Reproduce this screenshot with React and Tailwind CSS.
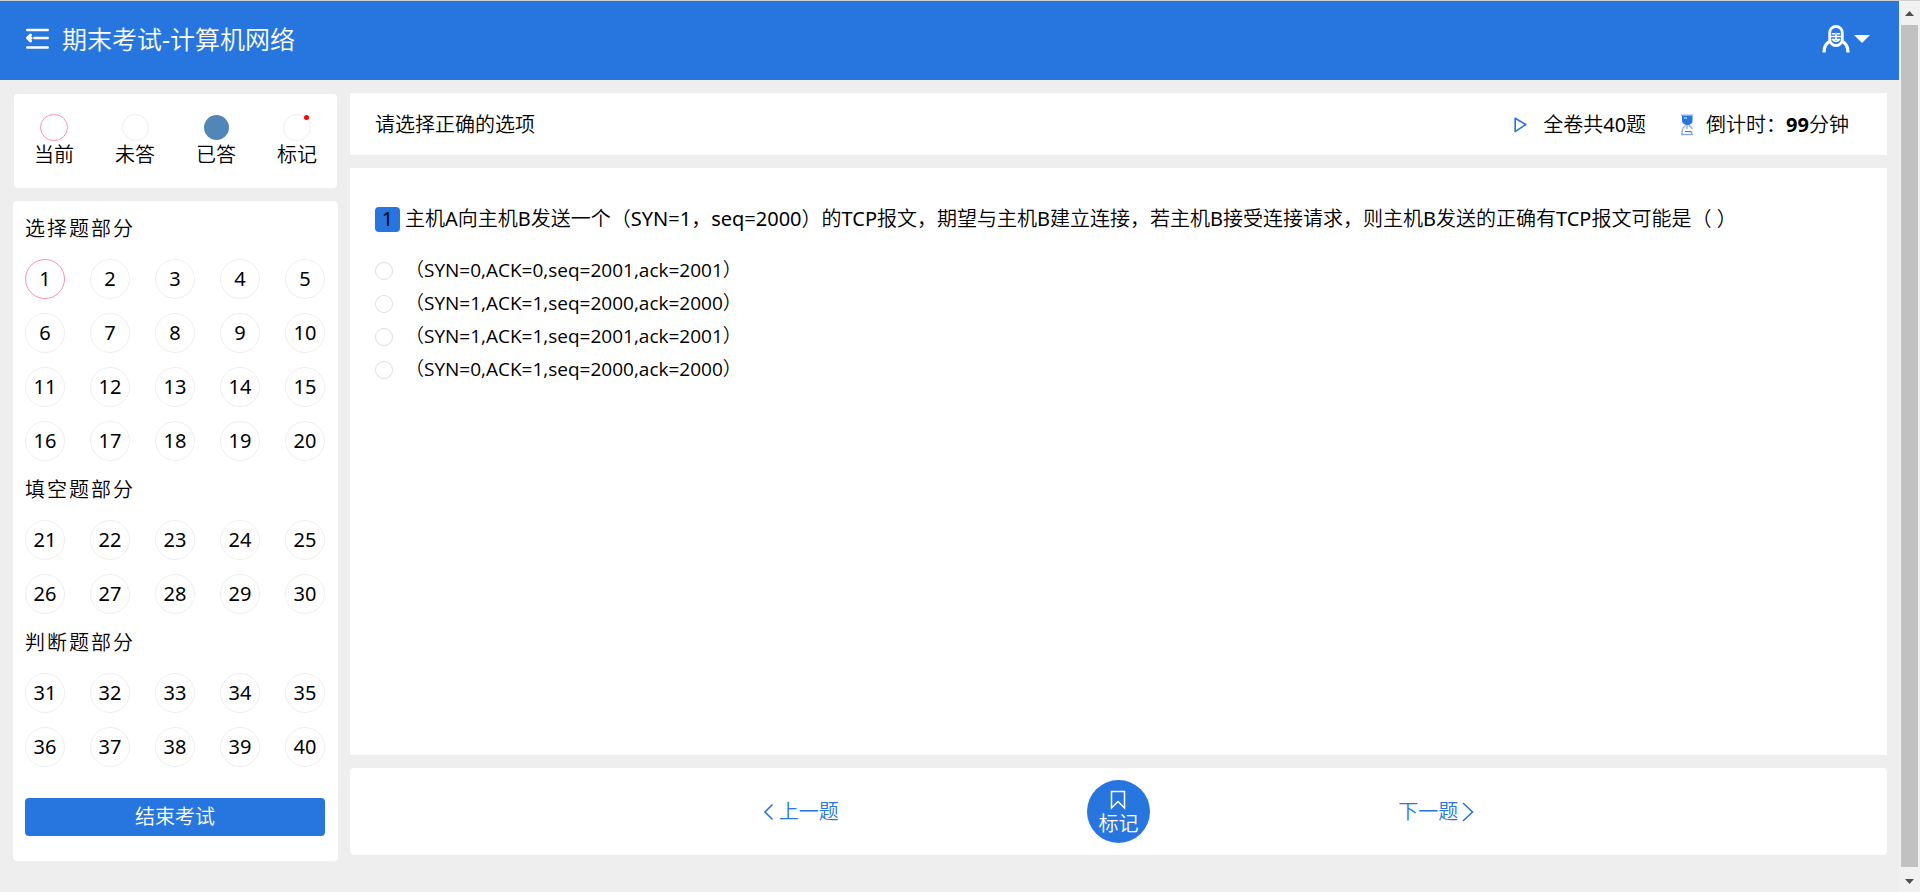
import React, { useState } from 'react';

const sections = [
  { title: '选择题部分', start: 1, count: 20 },
  { title: '填空题部分', start: 21, count: 10 },
  { title: '判断题部分', start: 31, count: 10 },
];

const options = [
  '（SYN=0,ACK=0,seq=2001,ack=2001）',
  '（SYN=1,ACK=1,seq=2000,ack=2000）',
  '（SYN=1,ACK=1,seq=2001,ack=2001）',
  '（SYN=0,ACK=1,seq=2000,ack=2000）',
];

const MenuIcon = () => (
  <svg width="24" height="22" viewBox="0 0 24 22" fill="none" stroke="currentColor" strokeWidth="2.6" strokeLinecap="round" strokeLinejoin="round">
    <path d="M2.300 2h20.400M9.500 10h13.200M2.300 19.500h20.400" />
    <path d="M5.500 7L2.500 10l3 3M3 10h3" strokeWidth="3" />
  </svg>
);

const UserIcon = () => (
  <svg width="28" height="28" viewBox="0 0 28 28" fill="none" stroke="currentColor" strokeLinecap="round">
    <rect x="7.700" y="1.500" width="12.600" height="19" rx="6.300" strokeWidth="2.800" />
    <path d="M7.500 16.500C4 18.500 2 22 2 27.500M20.500 16.500c3.500 2 5.500 5.500 5.500 11" strokeWidth="3.200" strokeLinecap="butt" />
    <path d="M9.500 11.500h9M14 8.500v5.500" strokeWidth="1.400" />
    <path d="M10.500 8.800h2M15.500 8.800h2M10.500 14.500c1.200 2.600 5.800 2.600 7 0z" strokeWidth="1.600" />
  </svg>
);

const PlayIcon = () => (
  <svg width="13" height="16" viewBox="0 0 13 16" fill="none" stroke="currentColor" strokeWidth="1.600" strokeLinejoin="round">
    <path d="M1.200 1.200v13.400L11.800 7.500z" />
  </svg>
);

const HourglassIcon = () => (
  <svg width="14" height="22" viewBox="0 0 14 22" fill="none">
    <path d="M1 1.200h12M1 20.500h12" stroke="#8aaaf0" strokeWidth="1.600" />
    <path d="M2 2h10.500v5c0 2-1.500 3-3.500 4H6C4 10 2 9 2 7z" fill="#2776e0" />
    <path d="M4 4h3" stroke="#fff" strokeWidth="1" />
    <path d="M5.500 11.500C3 13 2 14.500 2 20M9 11.500c2 1 3 2 3 3.500M11.500 17v3M7 11v4" stroke="#8aaaf0" strokeWidth="1.400" />
    <path d="M5 17.500h6" stroke="#2776e0" strokeWidth="1" />
  </svg>
);

const BookmarkIcon = () => (
  <svg width="16" height="20" viewBox="0 0 16 20" fill="none" stroke="currentColor" strokeWidth="1.500">
    <path d="M1.500 1.500h13v16.500L8 11.500 1.500 18z" />
  </svg>
);

const LegendItem = ({ label, children }) => (
  <div className="flex flex-col items-center">
    <span className="flex h-7 items-center">{children}</span>
    <span className="leading-7">{label}</span>
  </div>
);

const Scrollbar = () => (
  <div className="flex w-[21px] shrink-0 flex-col items-center justify-between bg-[#f1f1f1] pr-px text-[#505050]">
    <svg width="21" height="24" viewBox="0 0 21 24" fill="currentColor">
      <path d="M6 15l4.500-5 4.500 5z" />
    </svg>
    <div className="w-[17px] grow bg-[#c1c1c1]"></div>
    <svg width="21" height="25" viewBox="0 0 21 25" fill="currentColor">
      <path d="M6 12l4.500 5 4.500-5z" />
    </svg>
  </div>
);

const App = () => {
  const [current, setCurrent] = useState(1);

  return (
    <div
      lang="zh-CN"
      className="flex min-h-screen border-t border-[#d0d0d0] bg-[#eee] font-['Noto_Sans','Noto_Sans_CJK_SC_DemiLight','Noto_Sans_CJK_SC',sans-serif] text-xl text-black"
    >
      <div className="flex min-w-0 grow flex-col">
        {/* 顶部导航 */}
        <header className="flex h-[79px] items-center justify-between bg-[#2776e0] pr-[29px] pb-1 pl-[25px] text-white">
          <div className="flex items-center gap-[13px]">
            <button type="button" aria-label="收起菜单">
              <MenuIcon />
            </button>
            <h1 className="text-[25px] leading-9">期末考试-计算机网络</h1>
          </div>
          <button type="button" aria-label="用户菜单" className="flex items-center gap-1">
            <UserIcon />
            <svg width="16" height="8" viewBox="0 0 16 8" fill="currentColor">
              <path d="M0 0h16L8 8z" />
            </svg>
          </button>
        </header>

        <div className="flex gap-3 pt-[13px] pr-3 pl-[13px]">
          <aside className="flex w-[325px] shrink-0 flex-col gap-[13px] pt-px">
            {/* 图例 */}
            <div className="mx-px flex h-[94px] justify-between rounded bg-white px-5 pt-[19px]">
              <LegendItem label="当前">
                <i className="h-[27px] w-7 rounded-full border border-[#ff8fab]"></i>
              </LegendItem>
              <LegendItem label="未答">
                <i className="size-[27px] rounded-full border border-[#eee]"></i>
              </LegendItem>
              <LegendItem label="已答">
                <i className="size-[25px] rounded-full bg-[#5187b8]"></i>
              </LegendItem>
              <LegendItem label="标记">
                <i className="relative h-[27px] w-7 rounded-full border border-[#eee]">
                  <b className="absolute top-0 right-px size-[5px] rounded-full bg-[#f00]"></b>
                </i>
              </LegendItem>
            </div>

            {/* 答题卡 */}
            <div className="rounded bg-white pt-3 pr-[13px] pb-[25px] pl-3">
              {sections.map((section) => (
                <section key={section.title}>
                  <h2 className="leading-8 tracking-widest">{section.title}</h2>
                  <div className="grid grid-cols-[repeat(5,auto)] justify-between gap-y-[14px] pt-[14px] pb-[13px]">
                    {Array.from({ length: section.count }, (_, i) => section.start + i).map((n) => (
                      <button
                        key={n}
                        type="button"
                        onClick={() => setCurrent(n)}
                        className={`size-10 rounded-full border ${n === current ? 'border-[#ff8fab]' : 'border-[#eee]'}`}
                      >
                        {n}
                      </button>
                    ))}
                  </div>
                </section>
              ))}
              <button type="button" className="mt-[18px] h-[38px] w-full rounded bg-[#2776e0] text-white">
                结束考试
              </button>
            </div>
          </aside>

          <main className="flex min-w-0 grow flex-col gap-[13px]">
            <div className="flex h-[62px] items-center justify-between bg-white pt-0.5 pr-[38px] pl-[25px]">
              <p>请选择正确的选项</p>
              <div className="flex items-center gap-[34px]">
                <div className="flex items-center gap-4">
                  <span className="text-[#2776e0]"><PlayIcon /></span>
                  <span>全卷共40题</span>
                </div>
                <div className="flex items-center gap-3">
                  <HourglassIcon />
                  <span>倒计时：<b>99</b>分钟</span>
                </div>
              </div>
            </div>

            {/* 题目 */}
            <div className="grow bg-white px-[25px] pt-[35px]">
              <div className="flex items-center gap-[5px]">
                <span className="flex size-[25px] items-center justify-center rounded bg-[#2776e0]">1</span>
                <p className="leading-8">
                  主机A向主机B发送一个（SYN=1，seq=2000）的TCP报文，期望与主机B建立连接，若主机B接受连接请求，则主机B发送的正确有TCP报文可能是（ ）
                </p>
              </div>
              <div className="mt-[19px] flex flex-col">
                {options.map((option) => (
                  <label key={option} className="flex h-[33px] items-center gap-3">
                    <input type="radio" name="answer" className="size-[18px] appearance-none rounded-full border border-[#dcdfe6] checked:border-[#2776e0]" />
                    <span className="font-['Open_Sans','Noto_Sans_CJK_SC_DemiLight','Noto_Sans_CJK_SC',sans-serif] text-[19px]">{option}</span>
                  </label>
                ))}
              </div>
            </div>

            <div className="mb-[6px] flex h-[87px] items-center justify-center rounded bg-white text-[#2776e0]">
              <div className="grid w-[62%] grid-cols-3 items-center justify-items-center">
                <button type="button" className="flex items-center gap-1">
                  <svg width="12" height="18" viewBox="0 0 12 18" fill="none" stroke="currentColor" strokeWidth="1.600">
                    <path d="M9.500 1.500L2 9l7.500 7.500" />
                  </svg>
                  上一题
                </button>
                <button type="button" className="flex size-[63px] flex-col items-center justify-center rounded-full bg-[#2776e0] pt-1 text-white">
                  <BookmarkIcon />
                  <span className="leading-7">标记</span>
                </button>
                <button type="button" className="flex items-center gap-1">
                  下一题
                  <svg width="12" height="20" viewBox="0 0 12 20" fill="none" stroke="currentColor" strokeWidth="1.600">
                    <path d="M1 1l9.500 9L1 19" />
                  </svg>
                </button>
              </div>
            </div>
          </main>
        </div>
      </div>
      <Scrollbar />
    </div>
  );
};

export default App;
